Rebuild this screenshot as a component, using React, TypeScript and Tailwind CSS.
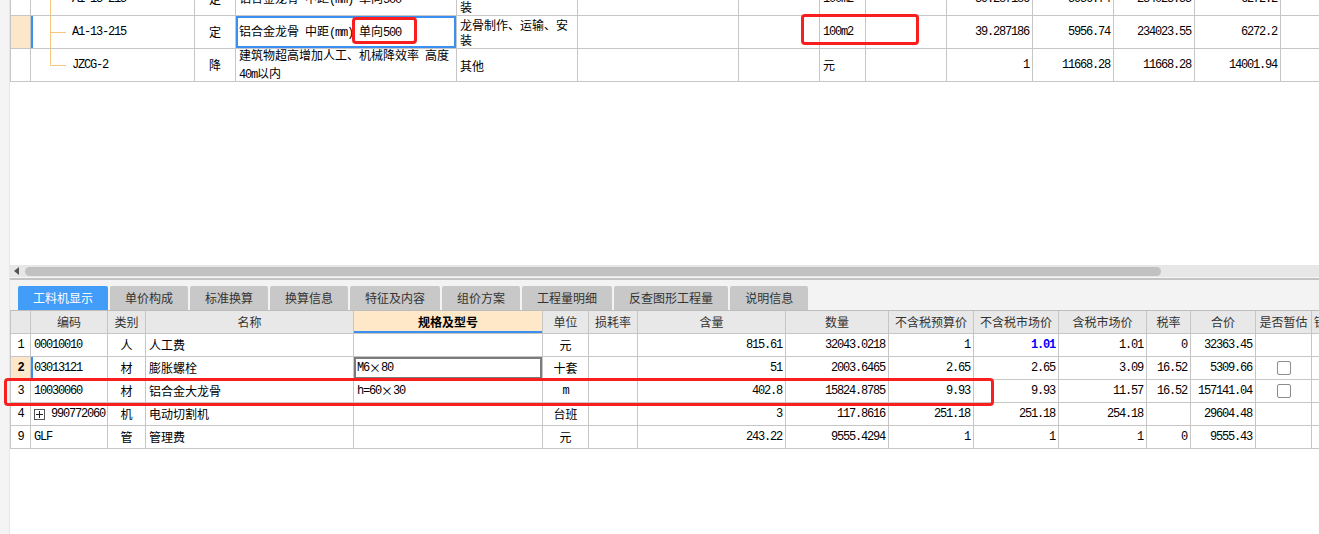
import React from 'react';

const mono = "font-['Liberation_Mono',monospace] text-[12px] tracking-[-1.2px]";
const cjk = "font-['Noto_Sans_CJK_SC',sans-serif] text-[12px]";

// split text into latin runs (mono, half width) and CJK runs
function T({ s, bold }: { s: string; bold?: boolean }) {
  const parts = s.match(/[\x00-\x7f]+|[^\x00-\x7f]+/g) ?? [];
  return (
    <>
      {parts.map((p, i) => (
        <span key={i} className={(/^[\x00-\x7f]/.test(p) ? mono : cjk) + (bold ? ' font-bold' : '')}>
          {p}
        </span>
      ))}
    </>
  );
}

type Align = 'l' | 'c' | 'r';

function Cell({
  children,
  align = 'l',
  className = '',
}: {
  children?: React.ReactNode;
  align?: Align;
  className?: string;
}) {
  const a = align === 'c' ? 'justify-center text-center' : align === 'r' ? 'justify-end text-right pr-[3px]' : 'justify-start text-left pl-[3px]';
  return (
    <div className={`relative flex items-center border-r border-b border-[#c6c6c6] overflow-hidden text-black ${a} ${className}`}>
      {children}
    </div>
  );
}

const topRows = [
  { code: 'A1-13-215', type: '定', name: '铝合金龙骨 中距(mm) 单向500', spec: '龙骨制作、运输、安装', unit: '100m2', q: '39.287186', a: '5956.74', b: '234023.55', c: '6272.2' },
  { code: 'A1-13-215', type: '定', name: '铝合金龙骨 中距(mm) 单向500', spec: '龙骨制作、运输、安装', unit: '100m2', q: '39.287186', a: '5956.74', b: '234023.55', c: '6272.2' },
  { code: 'JZCG-2', type: '降', name: '建筑物超高增加人工、机械降效率 高度40m以内', spec: '其他', unit: '元', q: '1', a: '11668.28', b: '11668.28', c: '14001.94' },
];

const tabs = ['工料机显示', '单价构成', '标准换算', '换算信息', '特征及内容', '组价方案', '工程量明细', '反查图形工程量', '说明信息'];

const heads = ['', '编码', '类别', '名称', '规格及型号', '单位', '损耗率', '含量', '数量', '不含税预算价', '不含税市场价', '含税市场价', '税率', '合价', '是否暂估', '锁定数量'];

const rows = [
  { n: '1', code: '00010010', t: '人', name: '人工费', spec: '', unit: '元', hl: '815.61', sl: '32043.0218', p1: '1', p2: '1.01', p3: '1.01', rate: '0', total: '32363.45', cb: false },
  { n: '2', code: '03013121', t: '材', name: '膨胀螺栓', spec: 'M6×80', unit: '十套', hl: '51', sl: '2003.6465', p1: '2.65', p2: '2.65', p3: '3.09', rate: '16.52', total: '5309.66', cb: true },
  { n: '3', code: '10030060', t: '材', name: '铝合金大龙骨', spec: 'h=60×30', unit: 'm', hl: '402.8', sl: '15824.8785', p1: '9.93', p2: '9.93', p3: '11.57', rate: '16.52', total: '157141.04', cb: true },
  { n: '4', code: '990772060', t: '机', name: '电动切割机', spec: '', unit: '台班', hl: '3', sl: '117.8616', p1: '251.18', p2: '251.18', p3: '254.18', rate: '', total: '29604.48', cb: false },
  { n: '9', code: 'GLF', t: '管', name: '管理费', spec: '', unit: '元', hl: '243.22', sl: '9555.4294', p1: '1', p2: '1', p3: '1', rate: '0', total: '9555.43', cb: false },
];

function TreeLine({ last }: { last?: boolean }) {
  return (
    <svg className="absolute left-0 top-0" width="40" height="33">
      <line x1="19.5" y1="0" x2="19.5" y2={last ? 16.5 : 33} stroke="#f6c67c" strokeWidth="1" />
      <line x1="19.5" y1="16.5" x2="35" y2="16.5" stroke="#f6c67c" strokeWidth="1" />
    </svg>
  );
}

export default function App() {
  return (
    <div className="relative flex w-[1319px] h-[534px] overflow-hidden bg-white">
      <div className="w-[10px] shrink-0 bg-[#f4f4f4] border-r border-[#e6e6e6]" />

      <div className="flex-1 flex flex-col min-w-0">
        {/* upper grid */}
        <div className="h-[265px] shrink-0 overflow-hidden bg-white">
          <div className="h-[83px] overflow-hidden">
            <div className="-mt-[17px] grid w-max grid-cols-[21px_164px_41px_221px_121px_161px_81px_46px_81px_86px_81px_81px_86px_80px]">
              {topRows.map((r, i) => {
                const sel = i === 1;
                return (
                  <React.Fragment key={i}>
                    <Cell className={`h-[33px] border-l ${sel ? 'bg-[#fde7c9]' : ''}`} />
                    <Cell className={`h-[33px] pl-[41px] ${sel ? 'shadow-[inset_2px_0_0_#3b8ff0]' : ''}`}>
                      <TreeLine last={i === 2} />
                      <T s={r.code} />
                    </Cell>
                    <Cell align="c" className="h-[33px]"><T s={r.type} /></Cell>
                    <Cell className={`h-[33px] ${sel ? 'shadow-[inset_0_0_0_2px_#3b8ff0]' : ''}`}>
                      <div className="leading-[15px]"><T s={r.name} /></div>
                    </Cell>
                    <Cell className="h-[33px]">
                      <div className="leading-[15px]"><T s={r.spec} /></div>
                    </Cell>
                    <Cell className="h-[33px]" />
                    <Cell className="h-[33px]" />
                    <Cell className="h-[33px]"><T s={r.unit} /></Cell>
                    <Cell className="h-[33px]" />
                    <Cell align="r" className="h-[33px]"><T s={r.q} /></Cell>
                    <Cell align="r" className="h-[33px]"><T s={r.a} /></Cell>
                    <Cell align="r" className="h-[33px]"><T s={r.b} /></Cell>
                    <Cell align="r" className="h-[33px]"><T s={r.c} /></Cell>
                    <Cell className="h-[33px]" />
                  </React.Fragment>
                );
              })}
            </div>
          </div>
        </div>

        {/* horizontal scrollbar */}
        <div className="h-[12px] shrink-0 flex items-center bg-[#e7e7e7] pl-[4px]">
          <svg width="6" height="8" className="shrink-0">
            <polygon points="5,0 5,8 0,4" fill="#555" />
          </svg>
          <div className="ml-[5px] w-[1136px] h-[9px] rounded-full bg-[#c1c1c1]" />
        </div>
        <div className="h-[1px] shrink-0 bg-[#f6f6f6]" />
        <div className="h-[2px] shrink-0 bg-[#c3c3c3]" />

        {/* tabs */}
        <div className="h-[30px] shrink-0 bg-[#f3f3f3] flex items-end gap-[2px] pl-[8px]">
          {tabs.map((t, i) => (
            <div
              key={t}
              className={`h-[24px] px-[15px] flex items-center rounded-t-[2px] ${cjk} ${i === 0 ? 'bg-[#419df8] text-white' : 'bg-[#c8c8c8] text-[#333]'}`}
            >
              {t}
            </div>
          ))}
        </div>

        {/* lower grid */}
        <div className="grid w-max border-t border-[#bdbdbd] grid-cols-[21px_77px_38px_208px_189px_46px_49px_148px_103px_85px_85px_88px_44px_65px_56px_60px]">
          {heads.map((h, i) => (
            <div
              key={i}
              className={`h-[23px] flex items-center justify-center border-r border-b border-[#c6c6c6] overflow-hidden whitespace-nowrap ${cjk} ${i === 0 ? 'border-l' : ''} ${
                i === 4 ? 'bg-[#fee8c8] font-bold text-black shadow-[inset_0_-2px_0_#3b8ff0]' : 'bg-[#e8e8e8] text-[#333]'
              } ${i === 15 ? 'justify-start pl-[2px]' : ''}`}
            >
              {h}
            </div>
          ))}
          {rows.map((r, i) => {
            const cur = i === 1;
            return (
              <React.Fragment key={r.n}>
                <Cell align="c" className={`h-[23px] border-l ${cur ? 'bg-[#fde7c9]' : ''}`}>
                  <T s={r.n} bold={cur} />
                </Cell>
                <Cell className={`h-[23px] ${cur ? 'shadow-[inset_2px_0_0_#3b8ff0]' : ''}`}>
                  {i === 3 && (
                    <span className="mr-[6px] w-[11px] h-[11px] border border-[#555] flex items-center justify-center shrink-0">
                      <svg width="7" height="7">
                        <line x1="0" y1="3.5" x2="7" y2="3.5" stroke="#222" />
                        <line x1="3.5" y1="0" x2="3.5" y2="7" stroke="#222" />
                      </svg>
                    </span>
                  )}
                  <T s={r.code} />
                </Cell>
                <Cell align="c" className="h-[23px]"><T s={r.t} /></Cell>
                <Cell className="h-[23px]"><T s={r.name} /></Cell>
                <Cell className={`h-[23px] pl-[2px] ${cur ? 'shadow-[inset_0_0_0_2px_#7b7b7b]' : ''}`}><T s={r.spec} /></Cell>
                <Cell align="c" className="h-[23px]"><T s={r.unit} /></Cell>
                <Cell className="h-[23px]" />
                <Cell align="r" className="h-[23px]"><T s={r.hl} /></Cell>
                <Cell align="r" className="h-[23px]"><T s={r.sl} /></Cell>
                <Cell align="r" className="h-[23px]"><T s={r.p1} /></Cell>
                <Cell align="r" className="h-[23px]">
                  {i === 0 ? (
                    <span className={`${mono} font-bold text-[#0000ff]`}>{r.p2}</span>
                  ) : (
                    <T s={r.p2} />
                  )}
                </Cell>
                <Cell align="r" className="h-[23px]"><T s={r.p3} /></Cell>
                <Cell align="r" className="h-[23px]"><T s={r.rate} /></Cell>
                <Cell align="r" className="h-[23px]"><T s={r.total} /></Cell>
                <Cell align="c" className="h-[23px]">
                  {r.cb && <span className="w-[14px] h-[14px] border border-[#8c8c8c] rounded-[2px] bg-white" />}
                </Cell>
                <Cell className="h-[23px]" />
              </React.Fragment>
            );
          })}
        </div>
        <div className="flex-1 bg-white" />
      </div>

      {/* red annotation marks drawn over the screenshot */}
      <div className="absolute left-[352px] top-[17px] w-[65px] h-[27px] border-[3px] border-[#fa1f1f] rounded-[4px]" />
      <div className="absolute left-[801px] top-[14px] w-[118px] h-[31px] border-[3px] border-[#fa1f1f] rounded-[4px]" />
      <div className="absolute left-[4px] top-[378px] w-[990px] h-[28px] border-[3px] border-[#fa1f1f] rounded-[4px]" />
    </div>
  );
}
